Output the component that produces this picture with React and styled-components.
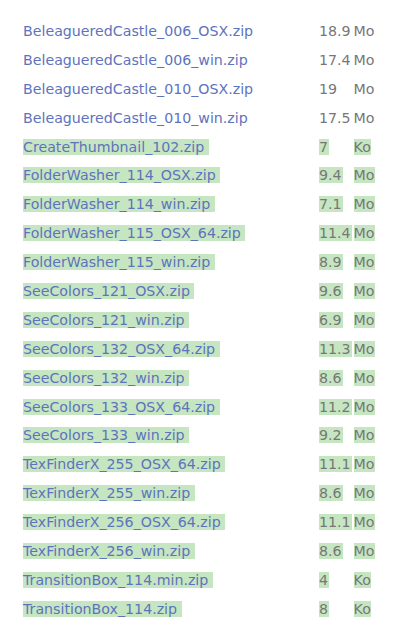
import React from 'react';
import styled, { createGlobalStyle } from 'styled-components';

const GlobalStyle = createGlobalStyle`
  body {
    margin: 0;
    background: #ffffff;
    font-family: "DejaVu Sans", Verdana, sans-serif;
  }
`;

const FILES = [
  { name: 'BeleagueredCastle_006_OSX.zip', size: '18.9', unit: 'Mo' },
  { name: 'BeleagueredCastle_006_win.zip', size: '17.4', unit: 'Mo' },
  { name: 'BeleagueredCastle_010_OSX.zip', size: '19', unit: 'Mo' },
  { name: 'BeleagueredCastle_010_win.zip', size: '17.5', unit: 'Mo' },
  { name: 'CreateThumbnail_102.zip', size: '7', unit: 'Ko', fresh: true },
  { name: 'FolderWasher_114_OSX.zip', size: '9.4', unit: 'Mo', fresh: true },
  { name: 'FolderWasher_114_win.zip', size: '7.1', unit: 'Mo', fresh: true },
  { name: 'FolderWasher_115_OSX_64.zip', size: '11.4', unit: 'Mo', fresh: true },
  { name: 'FolderWasher_115_win.zip', size: '8.9', unit: 'Mo', fresh: true },
  { name: 'SeeColors_121_OSX.zip', size: '9.6', unit: 'Mo', fresh: true },
  { name: 'SeeColors_121_win.zip', size: '6.9', unit: 'Mo', fresh: true },
  { name: 'SeeColors_132_OSX_64.zip', size: '11.3', unit: 'Mo', fresh: true },
  { name: 'SeeColors_132_win.zip', size: '8.6', unit: 'Mo', fresh: true },
  { name: 'SeeColors_133_OSX_64.zip', size: '11.2', unit: 'Mo', fresh: true },
  { name: 'SeeColors_133_win.zip', size: '9.2', unit: 'Mo', fresh: true },
  { name: 'TexFinderX_255_OSX_64.zip', size: '11.1', unit: 'Mo', fresh: true },
  { name: 'TexFinderX_255_win.zip', size: '8.6', unit: 'Mo', fresh: true },
  { name: 'TexFinderX_256_OSX_64.zip', size: '11.1', unit: 'Mo', fresh: true },
  { name: 'TexFinderX_256_win.zip', size: '8.6', unit: 'Mo', fresh: true },
  { name: 'TransitionBox_114.min.zip', size: '4', unit: 'Ko', fresh: true },
  { name: 'TransitionBox_114.zip', size: '8', unit: 'Ko', fresh: true },
];

const Listing = styled.div`
  display: grid;
  grid-template-columns: 294px max-content max-content;
  grid-auto-rows: 28.9px;
  column-gap: 2px;
  align-items: center;
  padding: 17px 0 0 23px;
  font-size: 14.2px;
  line-height: 17px;
`;

const Cell = styled.div`
  white-space: pre;
`;

const Mark = styled.span`
  background: ${p => (p.$fresh ? '#c6e6c2' : 'transparent')};
  color: ${p => (p.$link ? '#5e73bd' : '#777777')};
  padding-right: ${p => (p.$pad ? '1px' : '0')};
`;

const FileLink = styled.a`
  color: inherit;
  text-decoration: none;
`;

export default function App() {
  return (
    <>
      <GlobalStyle />
      <Listing>
        {FILES.map(f => (
          <React.Fragment key={f.name}>
            <Cell>
              <Mark $fresh={f.fresh} $link>
                <FileLink href="#">{f.name}</FileLink>{' '}
              </Mark>
            </Cell>
            <Cell>
              <Mark $fresh={f.fresh} $pad>{f.size}</Mark>
            </Cell>
            <Cell>
              <Mark $fresh={f.fresh}>{f.unit}</Mark>
            </Cell>
          </React.Fragment>
        ))}
      </Listing>
    </>
  );
}
